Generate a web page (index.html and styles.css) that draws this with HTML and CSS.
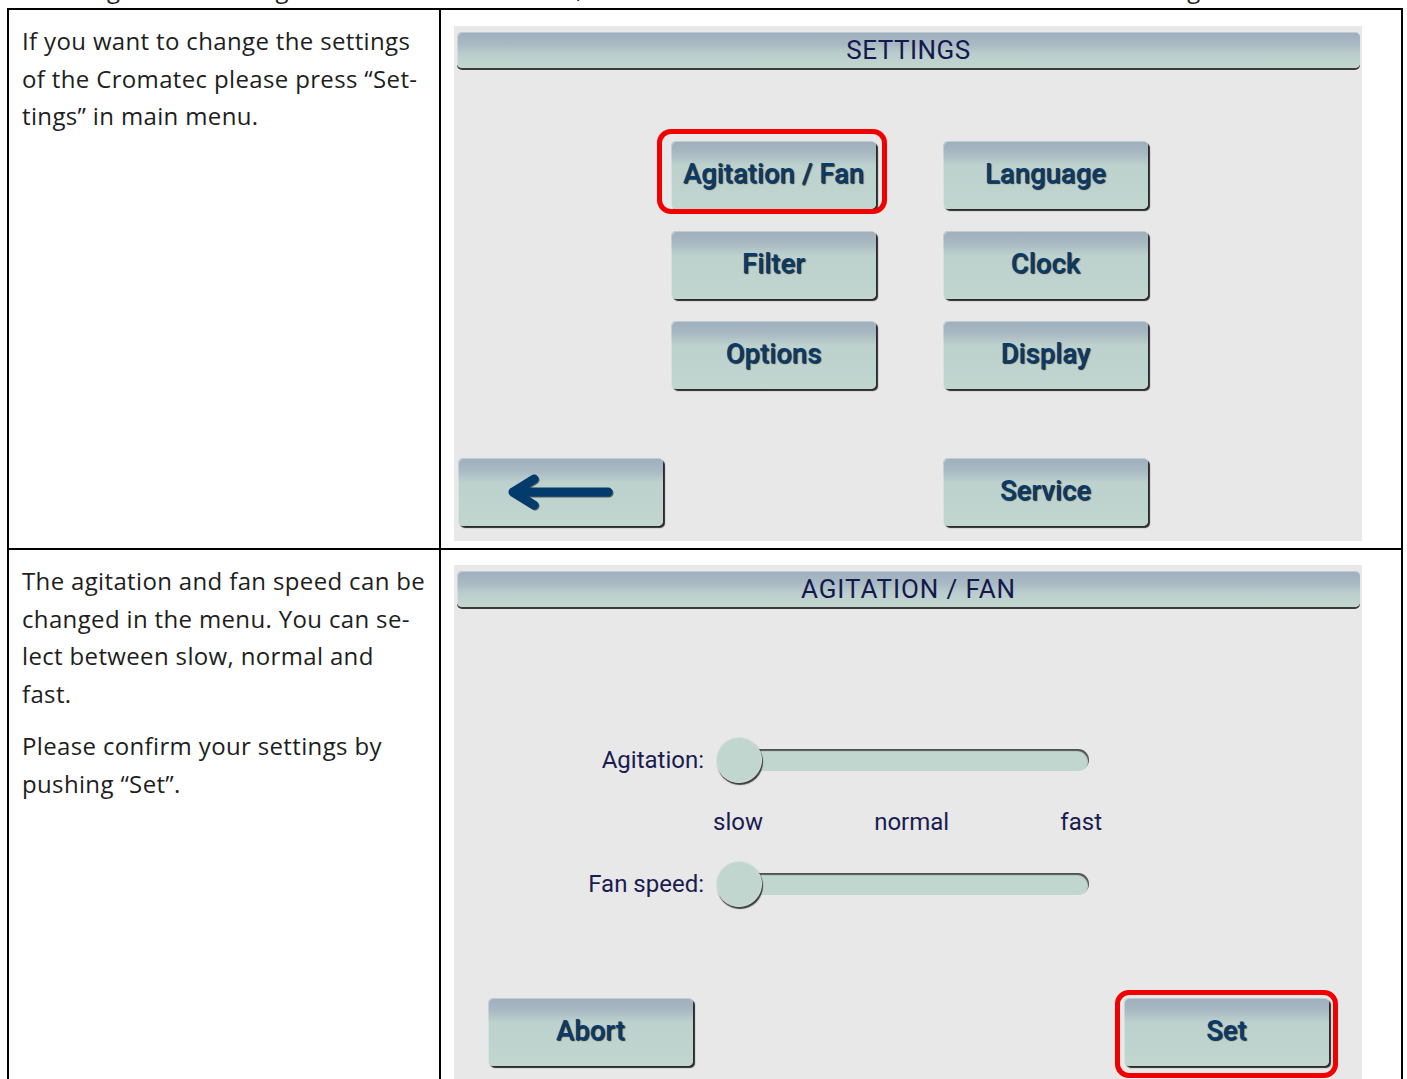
FILE: index.html
```html
<!DOCTYPE html>
<html>
<head>
<meta charset="utf-8">
<link rel="stylesheet" href="styles.css">
</head>
<body>
<div class="clip"><p class="prev">Setting the old strong and the level at the time, as the instrument is then in the main menu at the right site and the other settings are stored.</p></div>
<div class="table">
  <div class="cell text">
    <p>If you want to change the settings<br>of the Cromatec please press “Set-<br>tings” in main menu.</p>
  </div>
  <div class="cell shot">
    <div class="panel">
      <div class="hdr">SETTINGS</div>
      <div class="grid">
        <div class="btn">Agitation / Fan<span class="hl hl-agit"></span></div>
        <div class="btn">Language</div>
        <div class="btn">Filter</div>
        <div class="btn">Clock</div>
        <div class="btn">Options</div>
        <div class="btn">Display</div>
      </div>
      <div class="brow brow1">
        <div class="btn back"><svg width="113" height="40" viewBox="0 0 113 40"><path d="M9 20 H104 M30 7 L9 20 L30 33" fill="none" stroke="#023b6c" stroke-width="9" stroke-linecap="round" stroke-linejoin="round"/></svg></div>
        <div class="btn service">Service</div>
      </div>
    </div>
  </div>
  <div class="cell text">
    <p>The agitation and fan speed can be<br>changed in the menu. You can se-<br>lect between slow, normal and<br>fast.</p>
    <p>Please confirm your settings by<br>pushing “Set”.</p>
  </div>
  <div class="cell shot shot2">
    <div class="panel">
      <div class="hdr hdr2">AGITATION / FAN</div>
      <div class="srow srow1">
        <div class="slabel">Agitation:</div>
        <div class="slider"><div class="track"></div><span class="thumb"></span></div>
      </div>
      <div class="scale"><span>slow</span><span>normal</span><span>fast</span></div>
      <div class="srow srow2">
        <div class="slabel">Fan speed:</div>
        <div class="slider"><div class="track"></div><span class="thumb"></span></div>
      </div>
      <div class="brow brow2">
        <div class="btn abort">Abort</div>
        <div class="btn set">Set<span class="hl hl-set"></span></div>
      </div>
    </div>
  </div>
</div>
</body>
</html>
```
FILE: styles.css
```css
html, body {
  margin: 0;
  background: #fff;
}
body {
  font-family: "Open Sans", "Noto Sans", sans-serif;
  color: #1e1e1e;
  overflow: hidden;
  height: 1079px;
}
.clip {
  height: 8px;
  overflow: hidden;
  padding-left: 40px;
}
.prev {
  margin: -30px 0 0;
  font-size: 24px;
  line-height: 37.5px;
  white-space: nowrap;
  letter-spacing: 0.4px;
}
.table {
  margin-left: 7px;
  width: 1396px;
  box-sizing: border-box;
  display: grid;
  grid-template-columns: 432px 962px;
  border-top: 2px solid #000;
  border-left: 2px solid #000;
}
.cell {
  border-right: 2px solid #000;
  border-bottom: 2px solid #000;
}
.text {
  padding: 12px 4px 0 13px;
  font-size: 24px;
  letter-spacing: 0.35px;
  line-height: 37.5px;
}
.text p {
  margin: 0 0 15px;
  white-space: nowrap;
}
.shot {
  padding: 16px 0 7px 13px;
}
.shot2 {
  padding-top: 15px;
}
.panel {
  width: 908px;
  height: 515px;
  box-sizing: border-box;
  padding-top: 6px;
  background: #e8e8e8;
  font-family: Roboto, "Liberation Sans", sans-serif;
}
.hdr {
  margin: 0 2px 0 3px;
  height: 36px;
  border-radius: 5px;
  background: linear-gradient(#9fafbe 0%, #a9bac3 35%, #bacdcc 60%, #c3d7d0 100%);
  box-shadow: 0 2px 0 #3a3a3a, inset 1px 1px 0 rgba(255,255,255,0.35);
  display: flex;
  align-items: center;
  justify-content: center;
  font-size: 26px;
  letter-spacing: 0.5px;
  color: #15184d;
}
.hdr2 {
  letter-spacing: 0.9px;
}
.grid {
  display: grid;
  grid-template-columns: 205px 205px;
  column-gap: 67px;
  row-gap: 22px;
  margin: 73px 0 0 217px;
}
.btn {
  position: relative;
  width: 205px;
  height: 68px;
  box-sizing: border-box;
  padding-bottom: 3px;
  border-radius: 5px;
  background: linear-gradient(#9eafbd 0%, #a8b9c3 18%, #bdd1cd 36%, #c2d6d0 100%);
  box-shadow: 2px 2px 1px #2b2b2b, inset 1px 1px 0 rgba(255,255,255,0.35);
  display: flex;
  align-items: center;
  justify-content: center;
  font-weight: 500;
  font-size: 27.5px;
  color: #0b3b68;
  text-shadow: 1px 1px 1px rgba(0, 10, 25, 0.85);
}
.back {
  padding-bottom: 0;
}
.back svg {
  display: block;
  filter: drop-shadow(1px 1px 0.5px rgba(0,10,25,0.6));
}
.hl {
  position: absolute;
  box-sizing: border-box;
  border: 5px solid #f20000;
  border-radius: 14px;
}
.hl-agit {
  left: -14px;
  top: -12px;
  width: 230px;
  height: 85px;
}
.hl-set {
  left: -9px;
  top: -8px;
  width: 223px;
  height: 88px;
}
.brow {
  display: flex;
}
.brow1 {
  margin-top: 69px;
}
.back {
  margin-left: 4px;
}
.service {
  margin-left: 280px;
}
.srow {
  display: grid;
  grid-template-columns: 250px 373px;
  column-gap: 12px;
  align-items: center;
  height: 46px;
}
.srow1 {
  margin-top: 130px;
}
.srow2 {
  margin-top: 24px;
}
.slabel {
  text-align: right;
  font-size: 24px;
  color: #1a1c50;
}
.slider {
  position: relative;
  height: 46px;
}
.track {
  margin: 12px 0 0 14px;
  height: 22px;
  border-radius: 11px;
  background: #c2d6d0;
  box-shadow: inset -1px 2px 1px rgba(40,40,40,0.75);
}
.thumb {
  position: absolute;
  left: 0;
  top: 0;
  width: 46px;
  height: 46px;
  box-sizing: border-box;
  border-radius: 50%;
  background: #c2d6d0;
  border: 1px solid #d6e3df;
  box-shadow: 1px 2px 1px rgba(20,20,20,0.8);
}
.scale {
  margin: 24px 0 0 259px;
  width: 389px;
  height: 30px;
  display: flex;
  justify-content: space-between;
  align-items: center;
  font-size: 24px;
  color: #1a1c50;
}
.brow2 {
  margin-top: 91px;
}
.abort {
  margin-left: 34px;
}
.set {
  margin-left: 431px;
}
```
